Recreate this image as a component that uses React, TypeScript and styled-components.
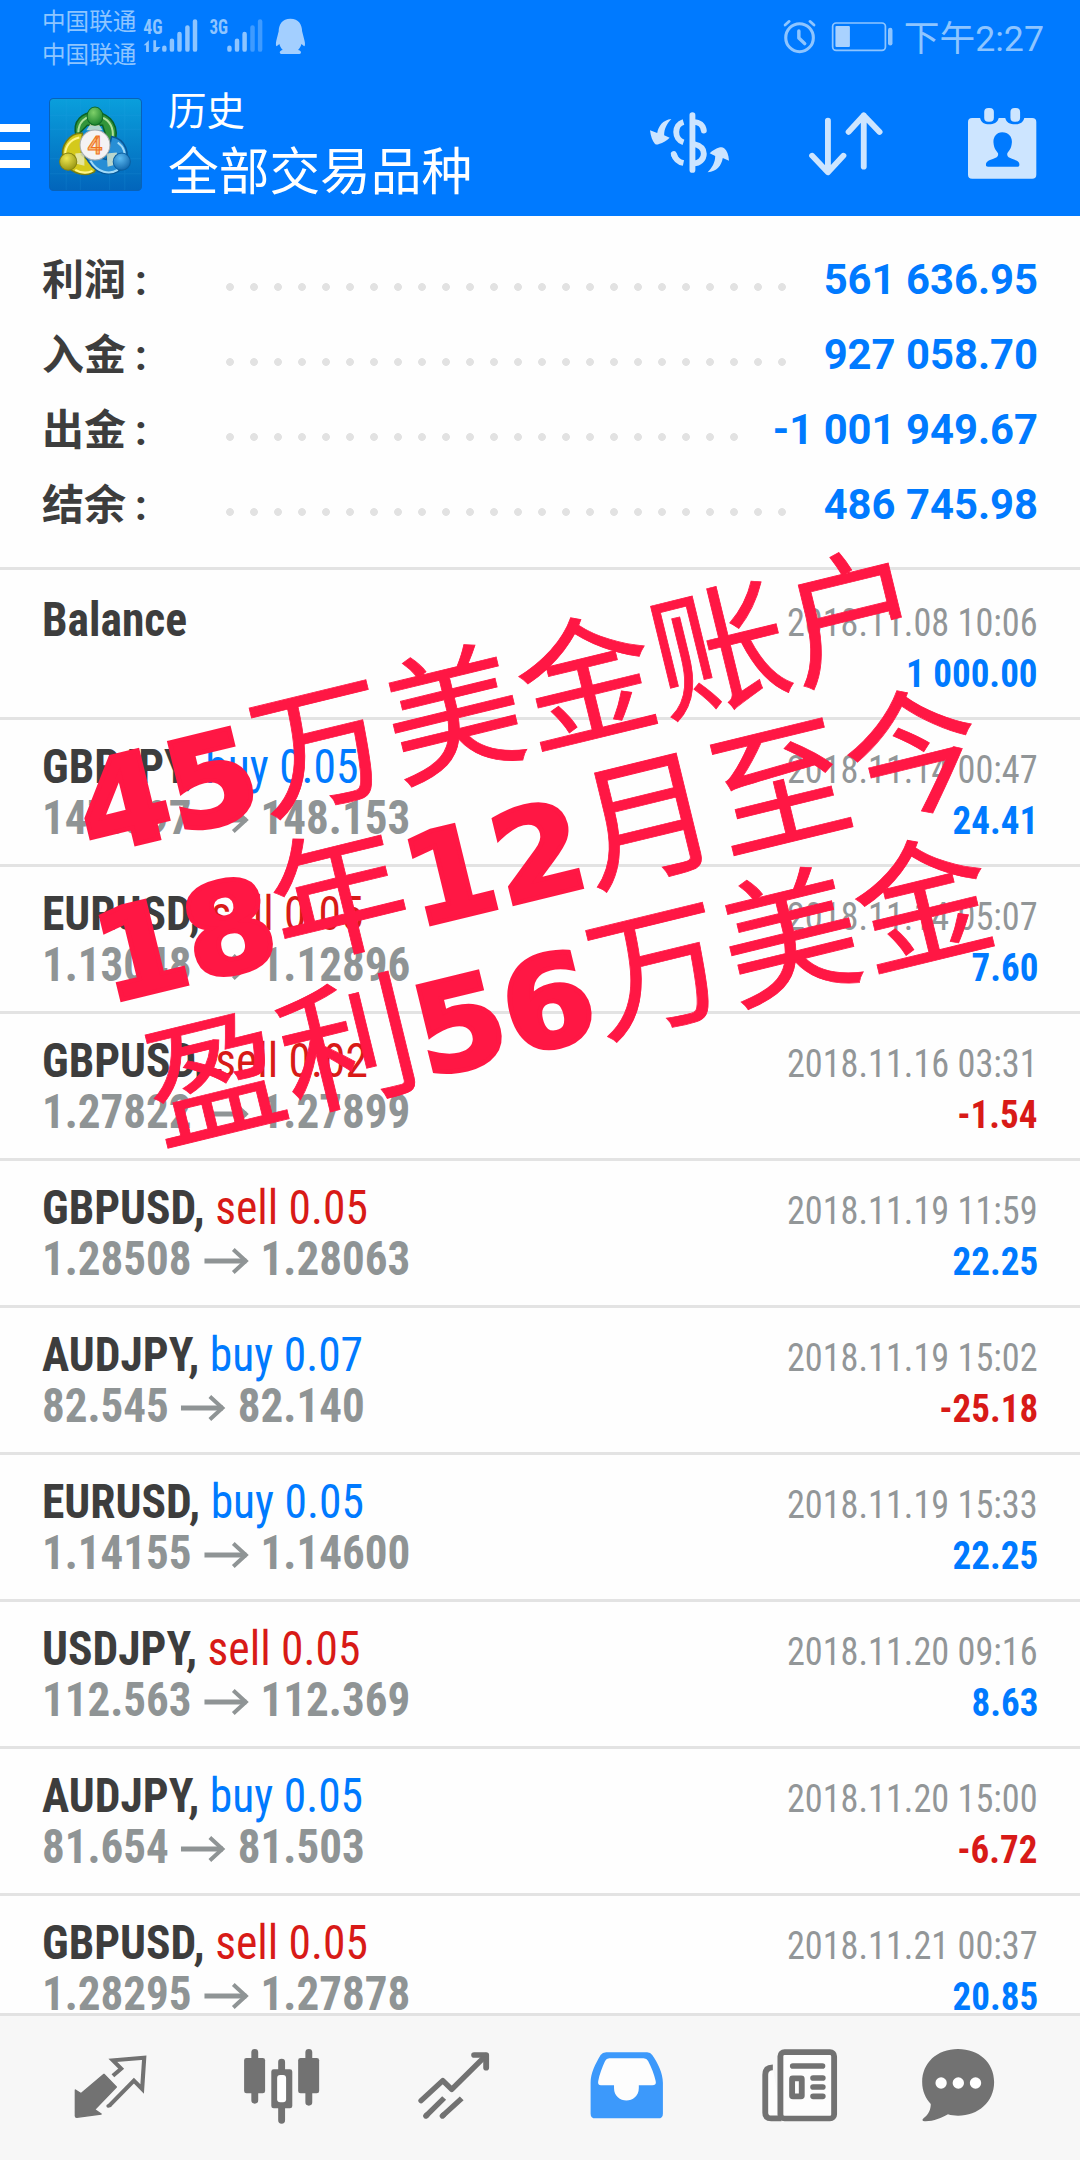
import React from 'react';
import styled, { createGlobalStyle } from 'styled-components';

const GlobalStyle = createGlobalStyle`
  * { box-sizing: border-box; }
  html, body { margin: 0; padding: 0; background: #fefefe; }
`;

const BLUE = '#007aff';
const RED = '#d81a17';
const SANS = `Roboto, "Noto Sans CJK SC", sans-serif`;
const CONDENSED = `"Roboto Condensed", Roboto, "Noto Sans CJK SC", sans-serif`;

const Screen = styled.div`
  position: relative;
  display: flex;
  flex-direction: column;
  width: 1080px;
  height: 2160px;
  overflow: hidden;
  background: #fefefe;
  font-family: ${SANS};
`;

const Header = styled.header`
  height: 216px;
  flex: none;
  background: ${BLUE};
  color: #fff;
`;

const StatusBar = styled.div`
  display: flex;
  align-items: center;
  height: 74px;
  padding: 0 36px 0 42px;
  color: #8ec5ff;
`;

const Carriers = styled.div`
  display: flex;
  flex-direction: column;
  padding-top: 3px;
  font-size: 23.6px;
  font-weight: 400;
  line-height: 33px;
  width: 101px;
  white-space: nowrap;
`;

const StatusIcon = styled.svg<{ $w: number; $ml?: number }>`
  display: block;
  flex: none;
  width: ${p => p.$w}px;
  height: 40px;
  margin-left: ${p => p.$ml ?? 0}px;
  overflow: visible;
`;

const Spacer = styled.div`
  flex: 1;
`;

const Clock = styled.div`
  margin: 3px 0 0 11px;
  font-size: 35.7px;
  font-weight: 400;
  line-height: 40px;
  white-space: nowrap;
`;

const Toolbar = styled.div`
  display: flex;
  align-items: center;
  height: 140px;
  padding-right: 43px;
`;

const MenuButton = styled.div`
  display: flex;
  flex-direction: column;
  gap: 10px;
  width: 30px;
  margin: 4px 19px 0 0;
`;

const MenuBar = styled.span`
  height: 8px;
  background: #fff;
`;

const Logo = styled.svg`
  display: block;
  width: 93px;
  height: 93px;
`;

const Titles = styled.div`
  display: flex;
  flex-direction: column;
  margin: 2px 0 0 26px;
  font-weight: 400;
  white-space: nowrap;
`;

const Caption = styled.div`
  font-size: 38.5px;
  line-height: 56px;
`;

const Title = styled.div`
  font-size: 50.7px;
  line-height: 66px;
`;

const ToolIcon = styled.svg<{ $w: number; $ml?: number }>`
  display: block;
  flex: none;
  width: ${p => p.$w}px;
  height: 76.67px;
  margin-left: ${p => p.$ml ?? 0}px;
`;

const Summary = styled.section`
  flex: none;
  height: 354px;
  padding: 26px 42px 0;
  border-bottom: 3px solid #e3e3e3;
`;

const SummaryRow = styled.div`
  display: flex;
  align-items: center;
  height: 75px;
`;

const SummaryLabel = styled.div`
  width: 176px;
  margin-bottom: 6px;
  font-size: 42px;
  font-weight: 700;
  color: #3d3d3d;
  white-space: nowrap;
`;

const Colon = styled.span`
  margin-left: 9px;
`;

const Dots = styled.div`
  flex: 1;
  height: 8px;
  margin: 15px 27px 0 0;
  background: radial-gradient(circle at center, #e2e2e2 3.5px, transparent 4.3px) 0 0 / 24px 8px repeat-x;
`;

const SummaryValue = styled.div`
  font-size: 41.8px;
  font-weight: 700;
  color: ${BLUE};
  white-space: nowrap;
`;

const List = styled.main`
  flex: 1;
  min-height: 0;
  overflow: hidden;
`;

const DealRow = styled.div<{ $tall?: boolean }>`
  display: flex;
  justify-content: space-between;
  height: ${p => (p.$tall ? 150 : 147)}px;
  padding: ${p => (p.$tall ? 24 : 21)}px 42px 0;
  border-bottom: 3px solid #e3e3e3;
  font-family: ${CONDENSED};
  font-stretch: 75%;
`;

const DealColumn = styled.div<{ $end?: boolean }>`
  display: flex;
  flex-direction: column;
  align-items: ${p => (p.$end ? 'flex-end' : 'flex-start')};
  padding-top: ${p => (p.$end ? 4 : 0)}px;
  line-height: 51px;
  white-space: pre;
`;

const Symbol = styled.div`
  font-size: 48px;
  font-weight: 700;
  color: #3d3d3d;
  transform: scaleX(0.948);
  transform-origin: left;
`;

const Action = styled.span<{ $sell: boolean }>`
  font-weight: 400;
  color: ${p => (p.$sell ? RED : BLUE)};
`;

const Prices = styled.div`
  display: flex;
  align-items: center;
  font-size: 48px;
  font-weight: 700;
  color: #8f9495;
  transform: scaleX(0.938);
  transform-origin: left;
`;

const PriceArrow = styled.svg`
  display: block;
  width: 48px;
  height: 26px;
  margin: 4px 12.5px 0 13px;
`;

const Time = styled.div`
  font-size: 39px;
  font-weight: 400;
  color: #929698;
  transform: scaleX(0.93);
  transform-origin: right;
`;

const Profit = styled.div<{ $negative: boolean }>`
  font-size: 39px;
  font-weight: 700;
  color: ${p => (p.$negative ? RED : BLUE)};
  transform: scaleX(0.95);
  transform-origin: right;
`;

const TabBar = styled.nav`
  display: flex;
  flex: none;
  align-items: center;
  height: 147px;
  padding: 0 24px;
  border-top: 3px solid #e2e2e2;
  background: #f7f7f7;
  color: #727272;
`;

const Tab = styled.div<{ $active?: boolean }>`
  display: flex;
  justify-content: center;
  width: 172px;
  color: ${p => (p.$active ? '#3c99fb' : 'inherit')};
  &:last-child { padding-right: 24px; }
`;

const TabIcon = styled.svg`
  display: block;
  flex: none;
  width: 82.64px;
  height: 82.67px;
`;

const Stamp = styled.div`
  position: absolute;
  left: 58px;
  top: 725px;
  transform: rotate(-13.75deg);
  transform-origin: 0 0;
  font-family: "Noto Sans CJK SC", sans-serif;
  font-size: 137px;
  line-height: 148px;
  color: #ff1744;
  white-space: nowrap;
  pointer-events: none;
  -webkit-text-stroke: 0.8px #ff1744;
`;

const StampLine = styled.div<{ $outdent?: boolean }>`
  height: 148px;
  margin-left: ${p => (p.$outdent ? -18 : 0)}px;
`;

const StampDigits = styled.span`
  display: inline-block;
  margin-right: 8.5px;
  font-family: "DejaVu Sans", sans-serif;
  font-weight: 700;
  font-size: 124px;
  line-height: 1;
  transform: scaleX(1.05);
  transform-origin: left;
  -webkit-text-stroke: 4.5px #ff1744;
`;

const summary = [
  { label: '利润', value: '561 636.95' },
  { label: '入金', value: '927 058.70' },
  { label: '出金', value: '-1 001 949.67' },
  { label: '结余', value: '486 745.98' },
];

type Deal = {
  symbol: string;
  action?: string;
  from?: string;
  to?: string;
  time: string;
  profit: string;
};

const deals: Deal[] = [
  { symbol: 'Balance', time: '2018.11.08 10:06', profit: '1 000.00' },
  { symbol: 'GBPJPY', action: 'buy 0.05', from: '147.597', to: '148.153', time: '2018.11.14 00:47', profit: '24.41' },
  { symbol: 'EURUSD', action: 'sell 0.05', from: '1.13048', to: '1.12896', time: '2018.11.14 05:07', profit: '7.60' },
  { symbol: 'GBPUSD', action: 'sell 0.02', from: '1.27822', to: '1.27899', time: '2018.11.16 03:31', profit: '-1.54' },
  { symbol: 'GBPUSD', action: 'sell 0.05', from: '1.28508', to: '1.28063', time: '2018.11.19 11:59', profit: '22.25' },
  { symbol: 'AUDJPY', action: 'buy 0.07', from: '82.545', to: '82.140', time: '2018.11.19 15:02', profit: '-25.18' },
  { symbol: 'EURUSD', action: 'buy 0.05', from: '1.14155', to: '1.14600', time: '2018.11.19 15:33', profit: '22.25' },
  { symbol: 'USDJPY', action: 'sell 0.05', from: '112.563', to: '112.369', time: '2018.11.20 09:16', profit: '8.63' },
  { symbol: 'AUDJPY', action: 'buy 0.05', from: '81.654', to: '81.503', time: '2018.11.20 15:00', profit: '-6.72' },
  { symbol: 'GBPUSD', action: 'sell 0.05', from: '1.28295', to: '1.27878', time: '2018.11.21 00:37', profit: '20.85' },
];

const stamp = [
  { parts: ['45', '万美金账户'] },
  { parts: ['18', '年', '12', '月至今'], outdent: true },
  { parts: ['盈利', '56', '万美金'] },
];

const SignalIcons = () => (
  <StatusIcon $w={163.6} viewBox="415 51 475 120" preserveAspectRatio="none" fill="#8ec5ff">
    <g fontFamily={CONDENSED} fontWeight="700" fontSize="58">
      <text x="416" y="101" textLength="56" lengthAdjust="spacingAndGlyphs">4G</text>
      <text x="608" y="101" textLength="54" lengthAdjust="spacingAndGlyphs">3G</text>
    </g>
    <path d="M432 121v35h-8v-20h-7zM445 121h8v20h13l-13 15h-8z" />
    <g strokeWidth="13" strokeLinecap="round" stroke="#8ec5ff">
      <path d="M477 143v6M499 122v27M521 102v47M544 82v67M566 64v85M666 143v6M688 122v27M710 102v47" />
      <path d="M733 82v67M755 64v85" stroke="#3f9bff" />
    </g>
    <path d="M843 56c-24 0-34 18-34 38l-7 28c-2 10-1 16 1 17l8-7c2 9 6 14 10 18-12 2-10 12-4 12h52c6 0 8-10-4-12 4-4 8-9 10-18l8 7c3-1 3-9 1-17l-7-28c0-20-10-38-34-38z" fill="#a3cfff" />
  </StatusIcon>
);

const PowerIcons = () => (
  <StatusIcon $w={110} viewBox="706 51 319 120" preserveAspectRatio="none" fill="none" stroke="#8ec5ff" strokeLinecap="round">
    <ellipse cx="754" cy="113" rx="40" ry="42" strokeWidth="9" />
    <path d="M752 93v21l17 17" strokeWidth="10" strokeLinejoin="round" />
    <path d="M712 75l12-11M796 75l-12-11" strokeWidth="8" />
    <rect x="850" y="69" width="153" height="82" rx="10" strokeWidth="5" />
    <rect x="858" y="78" width="42" height="63" rx="3" fill="#a9d2ff" stroke="none" />
    <path d="M1017 90v40" strokeWidth="13" />
  </StatusIcon>
);

const AppLogo = () => (
  <Logo viewBox="0 0 92 92">
    <defs>
      <linearGradient id="tile" x1="0" y1="0" x2="0" y2="1">
        <stop offset="0" stopColor="#0a9fdc" /><stop offset="1" stopColor="#0265bb" />
      </linearGradient>
      <radialGradient id="green" cx=".4" cy=".3" r=".8"><stop offset="0" stopColor="#7ed069" /><stop offset="1" stopColor="#0f7a26" /></radialGradient>
      <radialGradient id="yellow" cx=".4" cy=".3" r=".8"><stop offset="0" stopColor="#efe751" /><stop offset="1" stopColor="#8d8c0c" /></radialGradient>
      <radialGradient id="blue" cx=".4" cy=".3" r=".8"><stop offset="0" stopColor="#5cbbf2" /><stop offset="1" stopColor="#095ea5" /></radialGradient>
    </defs>
    <rect x=".5" y=".5" width="91" height="91" rx="4" fill="url(#tile)" stroke="#0862b8" />
    <path d="M17 1v90M31 1v90M60 1v90M75 1v90M1 17h90M1 31h90M1 60h90M1 75h90" stroke="#35aee8" strokeOpacity=".15" fill="none" />
    <path d="M27 38C22 22 34 14 45 14s24 9 21 26l-6 9-7-22H38z" fill="#32953a" stroke="#0b6127" strokeWidth="1.5" />
    <path d="M29 34c0-11 8-15 12-16M52 19c9 3 12 12 11 20" stroke="#aee09b" strokeWidth="2" fill="none" />
    <path d="M33 35C20 34 11 48 14 59c4 15 20 20 31 14l2-4-15-13z" fill="#d4c91b" stroke="#777d12" strokeWidth="1.5" />
    <path d="M30 39c-10 2-14 10-14 17M26 71c7 4 13 3 17 1" stroke="#fff68a" strokeWidth="2" fill="none" />
    <path d="M62 38c15 3 18 18 13 28-7 12-26 13-36-3l-4-8 22 6z" fill="#278ed5" stroke="#075899" strokeWidth="1.5" />
    <path d="M41 62c7 12 19 14 27 9M68 44c7 5 8 12 6 19" stroke="#a1daf8" strokeWidth="2" fill="none" />
    <path d="M37 32h16l-5-8h-6zM26 55l9-1v13l-8-2zM57 55l10-1 2 11-11 3z" fill="#e9edcb" opacity=".75" />
    <ellipse cx="45.500" cy="18" rx="7.800" ry="9" fill="url(#green)" stroke="#0f6a25" />
    <circle cx="19" cy="63" r="8.500" fill="url(#yellow)" stroke="#848211" />
    <circle cx="72" cy="63" r="8.500" fill="url(#blue)" stroke="#0a5ea0" />
    <circle cx="45.500" cy="46.500" r="14.800" fill="#f4f2f4" stroke="#a9adb0" />
    <text x="45.500" y="55.500" textAnchor="middle" fontFamily={SANS} fontSize="26" fontWeight="500" fill="#f8bd7d" stroke="#ef721f" strokeWidth="1">4</text>
  </Logo>
);

const CurrencyIcon = () => (
  <ToolIcon $w={79} viewBox="321 317 229 230" preserveAspectRatio="none" fill="#cde5ff">
    <path d="M383 356c-25 3-38 22-41 42l-21-8c2 18 7 32 14 40 4 4 8 3 12 1 12-4 23-10 31-19l-16-7c0-20 8-35 21-49z" />
    <path d="M488 516c27-3 40-20 44-43l18 8c-1-18-6-30-14-37-4-4-8-4-12-3-12 4-22 9-30 18l16 8c0 20-9 35-22 49z" />
    <g fill="none" stroke="#cde5ff" strokeWidth="17" strokeLinecap="round">
      <path d="M444 344v165" />
      <path d="M418 365c-28 8-28 52 0 61M390 462c4 13 13 23 28 26" strokeLinecap="butt" />
      <path d="M390 461l2 5" />
      <path d="M448 365c16 0 27 9 29 26" />
      <path d="M448 431c17 4 29 13 29 29 0 17-13 29-29 29" />
    </g>
  </ToolIcon>
);

const SortIcon = () => (
  <ToolIcon $w={73.7} $ml={79.5} viewBox="782 317 214 230" preserveAspectRatio="none" fill="none" stroke="#cde5ff" strokeWidth="17" strokeLinecap="round" strokeLinejoin="round">
    <path d="M837 361v154M791 466l46 50 45-50M941 499V345M897 395l44-50 46 50" />
  </ToolIcon>
);

const CalendarIcon = () => (
  <ToolIcon $w={69} $ml={85.5} viewBox="1242 317 200 230" preserveAspectRatio="none" fill="#cde5ff">
    <path fillRule="evenodd" d="M1254 353h23c3 14 13 19 26 19s25-5 28-19h19c3 14 14 19 28 19s24-5 27-19h23q12 0 12 12v158q0 12-12 12h-174q-12 0-12-12V365q0-12 12-12zm87 43c-18 0-27 17-25 32 1 16 8 23 13 31 2 11-4 13-15 17-12 4-20 8-20 18 0 4 2 5 6 5h83c5 0 8-1 8-6 0-10-9-13-20-17s-17-6-15-17c5-8 12-15 13-31 2-15-7-32-28-32z" />
    <rect x="1289" y="323" width="28" height="41" rx="12" />
    <rect x="1365" y="323" width="28" height="41" rx="12" />
  </ToolIcon>
);

const QuotesIcon = () => (
  <TabIcon viewBox="199.500 500 240 248" preserveAspectRatio="none">
    <path d="M301 582l36 38-63 68 19 13-71 10q-4 0-4-4v-78l16 11z" fill="currentColor" stroke="currentColor" strokeWidth="4" strokeLinejoin="round" />
    <path d="M327 586l24-21-24-25 91-8-6 94-24-25-72 76" fill="none" stroke="currentColor" strokeWidth="12" />
    <path d="M313 677l5-1" stroke="currentColor" strokeWidth="10" strokeLinecap="round" />
  </TabIcon>
);

const ChartsIcon = () => (
  <TabIcon viewBox="699 500 240 248" preserveAspectRatio="none" fill="currentColor">
    <path d="M739 516v144M817 545v175M896 516v150" stroke="currentColor" strokeWidth="20" strokeLinecap="round" />
    <rect x="708" y="533" width="61" height="106" rx="7" />
    <rect x="865" y="533" width="61" height="106" rx="7" />
    <rect x="787" y="567" width="61" height="117" rx="7" />
    <rect x="804" y="584" width="26" height="82" rx="9" fill="#fff" />
  </TabIcon>
);

const TradeIcon = () => (
  <TabIcon viewBox="1198.500 500 240 248" preserveAspectRatio="none" fill="none" stroke="currentColor" strokeWidth="16" strokeLinecap="round" strokeLinejoin="round">
    <path d="M1222 661l63-60 26 26 99-101" />
    <path d="M1376 524h35v38" strokeWidth="17" />
    <path d="M1398 530h16v18z" fill="currentColor" strokeWidth="4" />
    <path d="M1236 707l3-3M1284 707l3-3" />
    <path d="M1237 706l52-53M1285 706l55-52" strokeLinecap="butt" />
  </TabIcon>
);

const HistoryIcon = () => (
  <TabIcon viewBox="129.700 500 240 248" preserveAspectRatio="none" fill="currentColor">
    <path d="M191 516h119q10 0 15 8c16 24 31 54 31 84v92q0 14-14 14H160q-14 0-14-14v-92c0-30 14-58 29-84q6-8 16-8z" />
    <path d="M200 534q-8 0-12 8c-8 18-17 42-20 61q-2 12 8 12h38v8c0 50 72 50 72 0v-8h39q13 0 10-13c-4-20-13-42-22-60q-4-8-13-8z" fill="#fdfdfd" />
  </TabIcon>
);

const NewsIcon = () => (
  <TabIcon viewBox="631 500 240 248" preserveAspectRatio="none" fill="none" stroke="currentColor" strokeWidth="17">
    <path d="M677 561q-22 0-22 22v114q0 17 17 17h30" fill="#fdfdfd" />
    <rect x="699" y="515.500" width="156" height="199" rx="12" fill="#fdfdfd" />
    <path d="M735 557h86M794 593h28M794 620h28M794 648h28" strokeLinecap="round" />
    <rect x="733" y="594" width="28" height="54" rx="2" />
  </TabIcon>
);

const MessagesIcon = () => (
  <TabIcon viewBox="1094 500 240 248" preserveAspectRatio="none" fill="currentColor">
    <path d="M1213 506c61 0 105 41 105 99 0 60-46 101-105 101-10 0-20-1-29-4-18 11-44 22-68 21-7 0-8-5-3-9 15-12 21-26 21-43-15-17-25-38-25-66 0-57 43-99 104-99z" />
    <ellipse cx="1164" cy="608" rx="16.500" ry="17" fill="#fff" />
    <ellipse cx="1214" cy="608" rx="16.500" ry="17" fill="#fff" />
    <ellipse cx="1264" cy="608" rx="16.500" ry="17" fill="#fff" />
  </TabIcon>
);

const DealItem = ({ deal }: { deal: Deal }) => (
  <DealRow $tall={!deal.action}>
    <DealColumn>
      <Symbol>
        {deal.symbol}
        {deal.action && <>, <Action $sell={deal.action.startsWith('sell')}>{deal.action}</Action></>}
      </Symbol>
      {deal.from && (
        <Prices>
          <span>{deal.from}</span>
          <PriceArrow viewBox="0 0 45 26" preserveAspectRatio="none" fill="none" stroke="#8f9495" strokeWidth="5">
            <path d="M0 13h42" /><path d="M29 1.500l12.500 11.500L29 24.500" strokeWidth="4" />
          </PriceArrow>
          <span>{deal.to}</span>
        </Prices>
      )}
    </DealColumn>
    <DealColumn $end>
      <Time>{deal.time}</Time>
      <Profit $negative={deal.profit.startsWith('-')}>{deal.profit}</Profit>
    </DealColumn>
  </DealRow>
);

export default function App() {
  return (
    <Screen>
      <GlobalStyle />
      <Header>
        <StatusBar>
          <Carriers>
            <span>中国联通</span>
            <span>中国联通</span>
          </Carriers>
          <SignalIcons />
          <Spacer />
          <PowerIcons />
          <Clock>下午2:27</Clock>
        </StatusBar>
        <Toolbar>
          <MenuButton><MenuBar /><MenuBar /><MenuBar /></MenuButton>
          <AppLogo />
          <Titles>
            <Caption>历史</Caption>
            <Title>全部交易品种</Title>
          </Titles>
          <Spacer />
          <CurrencyIcon />
          <SortIcon />
          <CalendarIcon />
        </Toolbar>
      </Header>
      <Summary>
        {summary.map(item => (
          <SummaryRow key={item.label}>
            <SummaryLabel>{item.label}<Colon>:</Colon></SummaryLabel>
            <Dots />
            <SummaryValue>{item.value}</SummaryValue>
          </SummaryRow>
        ))}
      </Summary>
      <List>
        {deals.map(deal => <DealItem key={deal.time} deal={deal} />)}
      </List>
      <TabBar>
        <Tab><QuotesIcon /></Tab>
        <Tab><ChartsIcon /></Tab>
        <Tab><TradeIcon /></Tab>
        <Tab $active><HistoryIcon /></Tab>
        <Tab><NewsIcon /></Tab>
        <Tab><MessagesIcon /></Tab>
      </TabBar>
      <Stamp>
        {stamp.map(({ parts, outdent }, i) => (
          <StampLine key={i} $outdent={outdent}>
            {parts.map((part, j) => /^\d/.test(part) ? <StampDigits key={j}>{part}</StampDigits> : <span key={j}>{part}</span>)}
          </StampLine>
        ))}
      </Stamp>
    </Screen>
  );
}
